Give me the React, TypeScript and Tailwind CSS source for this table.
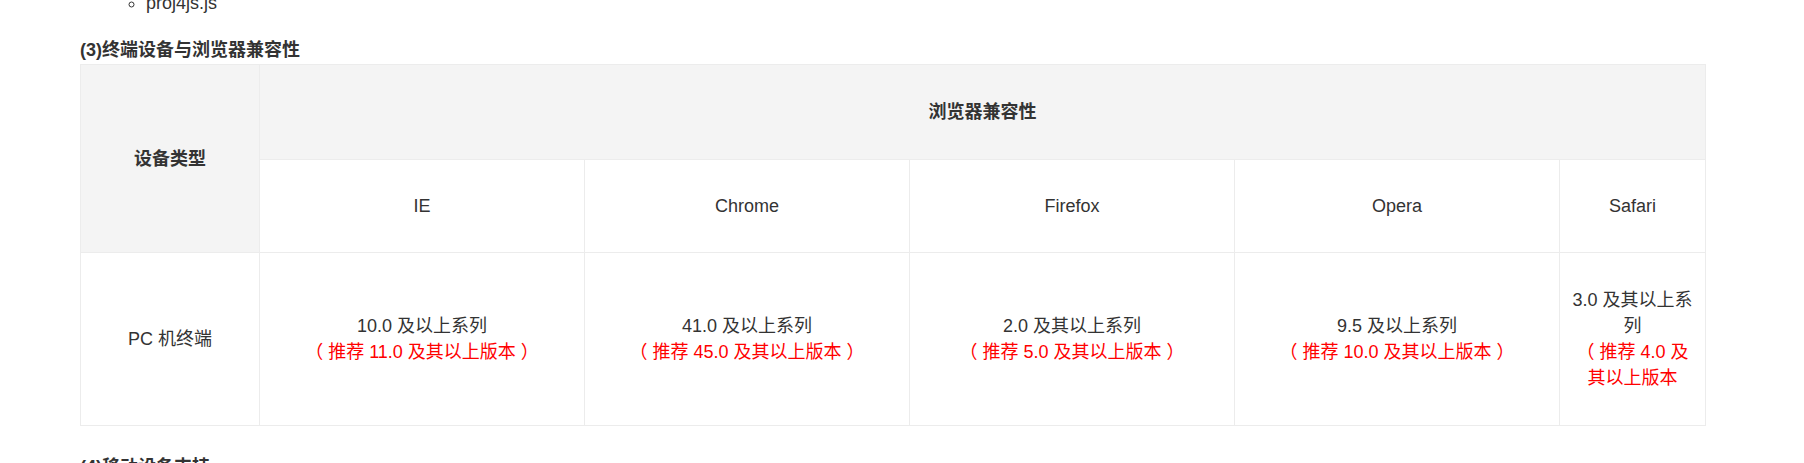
const FONT = "font-['Liberation_Sans','Noto_Sans_CJK_SC',sans-serif]";

const browsers = [
  { name: 'IE', min: '10.0 及以上系列', rec: ['（ 推荐 11.0 及其以上版本 ）'] },
  { name: 'Chrome', min: '41.0 及以上系列', rec: ['（ 推荐 45.0 及其以上版本 ）'] },
  { name: 'Firefox', min: '2.0 及其以上系列', rec: ['（ 推荐 5.0 及其以上版本 ）'] },
  { name: 'Opera', min: '9.5 及以上系列', rec: ['（ 推荐 10.0 及其以上版本 ）'] },
  { name: 'Safari', min: '3.0 及其以上系列', rec: ['（ 推荐 4.0 及', '其以上版本'] },
];

export default function App() {
  return (
    <div className={`${FONT} h-[463px] overflow-hidden bg-white pl-[80px] text-[18px] leading-[26px] text-[#333]`}>
      <ul className="-mt-[10px] list-[circle] pl-[66px]">
        <li>proj4js.js</li>
      </ul>
      <h3 className="mt-[21px] text-[18px] font-bold leading-[26px]">(3)终端设备与浏览器兼容性</h3>

      <table className="mt-[1px] w-[1625px] table-fixed border-collapse text-center">
        <colgroup>
          <col className="w-[179px]" />
          <col className="w-[325px]" />
          <col className="w-[325px]" />
          <col className="w-[325px]" />
          <col className="w-[325px]" />
          <col className="w-[146px]" />
        </colgroup>
        <thead>
          <tr className="h-[95px]">
            <th rowSpan={2} className="border border-[#ececec] bg-[#f4f4f4] font-bold">
              设备类型
            </th>
            <th colSpan={5} className="border border-[#ececec] bg-[#f4f4f4] font-bold">
              浏览器兼容性
            </th>
          </tr>
          <tr className="h-[93px]">
            {browsers.map((b) => (
              <th key={b.name} className="border border-[#ececec] px-[10px] font-normal">
                {b.name}
              </th>
            ))}
          </tr>
        </thead>
        <tbody>
          <tr className="h-[173px]">
            <td className="border border-[#ececec] px-[10px]">PC 机终端</td>
            {browsers.map((b) => (
              <td key={b.name} className="border border-[#ececec] px-[10px]">
                <p>{b.min}</p>
                {b.rec.map((line) => (
                  <p key={line} className="text-[#ff0000]">
                    {line}
                  </p>
                ))}
              </td>
            ))}
          </tr>
        </tbody>
      </table>

      <h3 className="mt-[28px] text-[18px] font-bold leading-[26px]">(4)移动设备支持</h3>
    </div>
  );
}
